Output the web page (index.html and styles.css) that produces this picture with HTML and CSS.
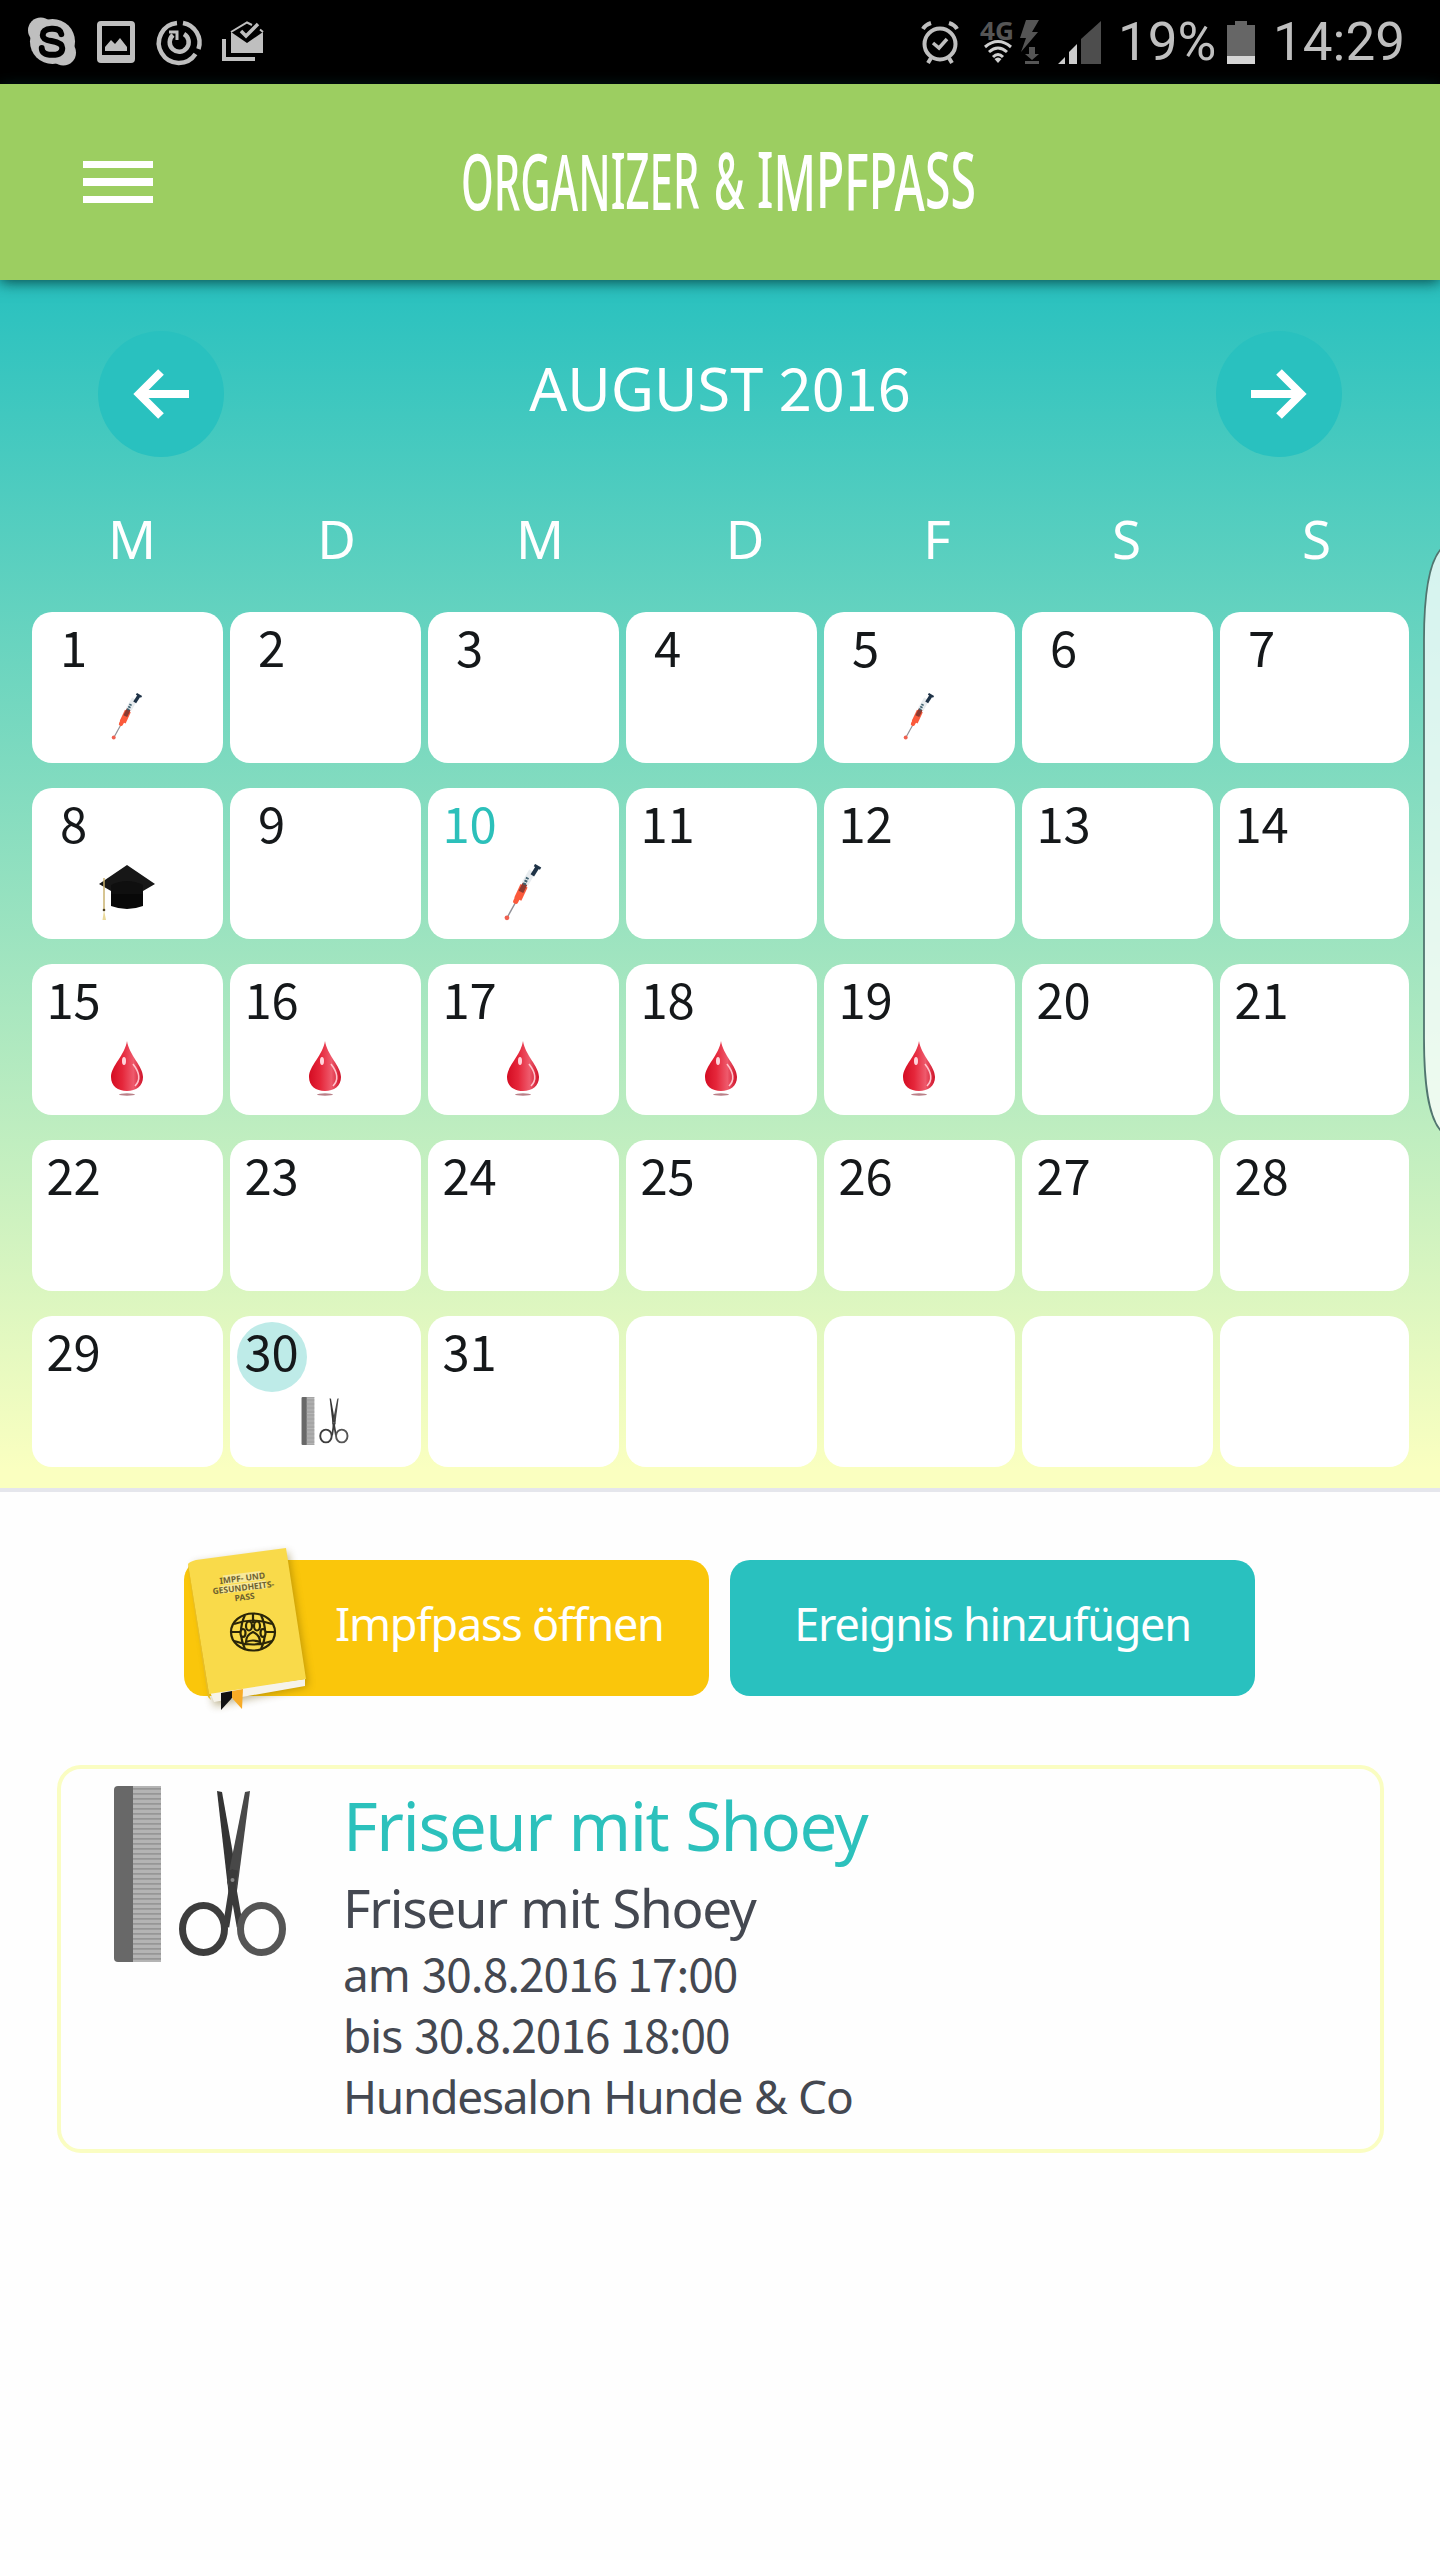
FILE: index.html
```html
<!DOCTYPE html>
<html lang="de">
<head>
<meta charset="utf-8">
<title>Organizer &amp; Impfpass</title>
<link rel="stylesheet" href="styles.css">
</head>
<body>
<svg class="defs" width="0" height="0">
  <defs>
    <linearGradient id="dropFill" x1="0" y1="0" x2="1" y2="0">
      <stop offset="0" stop-color="#d40c22"/><stop offset=".35" stop-color="#e5263a"/><stop offset=".7" stop-color="#ee5a6c"/><stop offset="1" stop-color="#cf1128"/>
    </linearGradient>
    <symbol id="syringe" viewBox="0 0 40 56">
      <path d="M4 53L14 35" stroke="#8f8f96" stroke-width="1.400"/>
      <circle cx="4.500" cy="52" r="2.300" fill="#f0604f"/>
      <path d="M15 34L21 21" stroke="#fb5a3b" stroke-width="7.500"/>
      <path d="M13 36L15 32" stroke="#fb5a3b" stroke-width="5" stroke-linecap="round"/>
      <path d="M18 27L22 19" stroke="#8c3a30" stroke-width="5"/>
      <path d="M22 19L29 7" stroke="#e8ecef" stroke-width="7"/>
      <path d="M21 20L24.500 13" stroke="#40616f" stroke-width="3" stroke-dasharray="2 1"/>
      <path d="M29 11L34 3" stroke="#1f3347" stroke-width="4"/>
      <path d="M31 1L37 4.500" stroke="#1f3347" stroke-width="2.500"/>
    </symbol>
    <symbol id="drop" viewBox="0 0 36 58">
      <path d="M18 1C20 15 34 26 34 37C34 46 27 51 18 51S2 46 2 37C2 26 16 15 18 1Z" fill="url(#dropFill)"/>
      <path d="M24 24C31 33 32 40 26 46" fill="none" stroke="#ffc3cc" stroke-width="1.600"/>
      <ellipse cx="15" cy="21" rx="2" ry="4" fill="#ffd5dc"/>
      <ellipse cx="18" cy="54.500" rx="8" ry="1.200" fill="#b98088"/>
    </symbol>
    <symbol id="cap" viewBox="0 0 58 58">
      <path d="M13 20H45V42Q29 48 13 42Z" fill="#080808"/>
      <path d="M29 1L57 20L45 27Q29 12 13 27L1 20Z" fill="#171717"/>
      <path d="M13 21Q29 13 45 21V30H13Z" fill="#0f0f0f"/>
      <path d="M6 14V46" stroke="#c9b26f" stroke-width="1.500"/>
      <path d="M6 46L4.500 56H8Z" fill="#ead99a"/>
      <circle cx="6" cy="46" r="1.300" fill="#493c20"/>
    </symbol>
    <symbol id="salon" viewBox="0 0 172 176">
      <path d="M4 0H20V176H4Q0 176 0 172V4Q0 0 4 0Z" fill="#686868"/>
      <rect x="19" width="28" height="176" fill="#b4b4b4"/>
      <path d="M33 2V176" stroke="#969696" stroke-width="28" stroke-dasharray="1.800 3.200"/>
      <path d="M103 5L108 6L124 96L116 120Z" fill="#343434"/>
      <path d="M136 5L131 6L113 96L121 120Z" fill="#484848"/>
      <path d="M121 84L112 141M116 84L126 141" stroke="#3b3b3b" stroke-width="6.500"/>
      <ellipse cx="89.500" cy="143" rx="21" ry="23.500" fill="none" stroke="#3d3d3d" stroke-width="7"/>
      <ellipse cx="147.500" cy="143" rx="21" ry="23.500" fill="none" stroke="#555" stroke-width="7"/>
      <circle cx="118.500" cy="94" r="2" fill="#888"/>
    </symbol>
  </defs>
</svg>

<div class="status">
  <div class="status-left">
    <svg width="49" height="50" viewBox="0 0 50 50"><circle cx="13" cy="13" r="13" fill="#bfbfbf"/><circle cx="36" cy="36" r="13" fill="#bfbfbf"/><circle cx="25" cy="24.500" r="23" fill="#bfbfbf"/><path d="M34 17Q33 11 24 11.500Q15 12 15 18Q15 22.500 24 24Q35 26 35 31Q35 38 25 38Q14 38 14 31" fill="none" stroke="#000" stroke-width="6" stroke-linecap="round"/></svg>
    <svg width="38" height="42" viewBox="0 0 38 42"><path fill="#bfbfbf" fill-rule="evenodd" d="M4 0H34Q38 0 38 4V38Q38 42 34 42H4Q0 42 0 38V4Q0 0 4 0ZM5 5V34H33V5ZM8 30V26L14 19L18 23L23 17L30 26V30Z"/></svg>
    <svg class="sync" width="45" height="45" viewBox="0 0 45 45" fill="none" stroke="#bfbfbf" stroke-width="4.500"><path d="M26 3A20 20 0 0 1 41.500 29M38.500 34A20 20 0 1 1 20 3"/><path d="M27 14A9.500 9.500 0 1 1 16 15"/><path d="M12 12H20V20" stroke-width="3"/></svg>
    <svg width="42" height="42" viewBox="0 0 42 42"><path fill="#bfbfbf" d="M9 11L25 22L41 11V32H9Z"/><path d="M9 11L25 1.500L30 4M41 11L38 8.500" stroke="#bfbfbf" stroke-width="2" fill="none"/><path d="M19 10L24 15L36 3" stroke="#bfbfbf" stroke-width="3.500" fill="none"/><path d="M2 18V38H33" stroke="#bfbfbf" stroke-width="4" fill="none"/></svg>
  </div>
  <div class="status-right">
    <svg class="alarm" width="38" height="43" viewBox="0 0 38 43" fill="none" stroke="#bfbfbf"><circle cx="19" cy="23" r="15.500" stroke-width="4"/><path d="M12 22L18 27L26 18" stroke-width="3.500"/><path d="M2 8Q4 4 10 2M28 2Q34 4 36 8" stroke-width="4"/><path d="M10 37L7 42M28 37L31 42" stroke-width="4"/></svg>
    <svg class="net" width="60" height="44" viewBox="0 0 60 44"><text class="net-label" x="0" y="20" textLength="34" lengthAdjust="spacingAndGlyphs">4G</text><g fill="none" stroke="#cfcfcf" stroke-width="3"><path d="M5 27Q18 16 31 27M9 32Q18 24 27 32M13 37Q18 32 23 37"/></g><path d="M14.500 39Q18 36 21.500 39L18 43Z" fill="#cfcfcf"/><path d="M46 0H59L52 12H58L41 32L46 18H40Z" fill="#555"/><path d="M49 27H55V34H59L52 40L45 34H49ZM45 41H59V44H45Z" fill="#555"/></svg>
    <svg class="signal" width="43" height="43" viewBox="0 0 43 43"><path d="M0 43L7 36V43ZM11 31L19 23V43H11Z" fill="#ccc"/><path d="M23 18L43 0V43H23Z" fill="#4d4d4d"/></svg>
    <span class="battery-text">19%</span>
    <svg class="battery" width="28" height="43" viewBox="0 0 28 43"><path d="M0 4H8V0H20V4H28V43H0Z" fill="#666"/><path d="M0 35H28V43H0Z" fill="#d5d5d5"/></svg>
    <span class="clock">14:29</span>
  </div>
</div>

<header class="header">
  <div class="menu"><i></i><i></i><i></i></div>
  <h1 class="title"><svg width="516" height="72" viewBox="0 0 516 72">
    <text transform="translate(-1 64) scale(.537 1)" dy="0 1 -1 1 0 -2 0 1 -1">ORGANIZER</text>
    <text transform="translate(252 63) scale(.53 1)">&amp;</text>
    <text transform="translate(295 64) scale(.594 1)" dy="-2 3 -3 2 -1 2 -3 0">IMPFPASS</text>
  </svg></h1>
</header>

<main>
  <section class="calendar">
    <div class="month">
      <div class="arrow"><svg width="126" height="126" viewBox="0 0 126 126"><path d="M91 63H42M63 41L41 63L63 85" fill="none" stroke="#fff" stroke-width="8"/></svg></div>
      <h2>AUGUST <span class="num">2016</span></h2>
      <div class="arrow"><svg width="126" height="126" viewBox="0 0 126 126"><path d="M35 63H84M63 41L85 63L63 85" fill="none" stroke="#fff" stroke-width="8"/></svg></div>
    </div>
    <div class="weekdays"><span>M</span><span>D</span><span>M</span><span>D</span><span>F</span><span>S</span><span>S</span></div>
    <div class="days">
      <div class="day"><b>1</b><svg class="small"><use href="#syringe"/></svg></div><div class="day"><b>2</b></div><div class="day"><b>3</b></div><div class="day"><b>4</b></div><div class="day"><b>5</b><svg class="small"><use href="#syringe"/></svg></div><div class="day"><b>6</b></div><div class="day"><b>7</b></div>
      <div class="day"><b>8</b><svg><use href="#cap"/></svg></div><div class="day"><b>9</b></div><div class="day"><b class="today">10</b><svg><use href="#syringe"/></svg></div><div class="day"><b>11</b></div><div class="day"><b>12</b></div><div class="day"><b>13</b></div><div class="day"><b>14</b></div>
      <div class="day"><b>15</b><svg><use href="#drop"/></svg></div><div class="day"><b>16</b><svg><use href="#drop"/></svg></div><div class="day"><b>17</b><svg><use href="#drop"/></svg></div><div class="day"><b>18</b><svg><use href="#drop"/></svg></div><div class="day"><b>19</b><svg><use href="#drop"/></svg></div><div class="day"><b>20</b></div><div class="day"><b>21</b></div>
      <div class="day"><b>22</b></div><div class="day"><b>23</b></div><div class="day"><b>24</b></div><div class="day"><b>25</b></div><div class="day"><b>26</b></div><div class="day"><b>27</b></div><div class="day"><b>28</b></div>
      <div class="day"><b>29</b></div><div class="day"><b class="selected">30</b><svg class="small"><use href="#salon"/></svg></div><div class="day"><b>31</b></div><div class="day"></div><div class="day"></div><div class="day"></div><div class="day"></div>
    </div>
  </section>

  <div class="actions">
    <div class="button pass">
      <svg class="book" width="126" height="165" viewBox="0 0 126 165">
        <defs><filter id="bookShadow" x="-20%" y="-20%" width="140%" height="140%"><feGaussianBlur stdDeviation="4"/></filter></defs>
        <path d="M10 18L104 6L124 140L30 160Z" fill="#6b5200" opacity=".45" filter="url(#bookShadow)"/>
        <path d="M26 146L121 133V140L30 156Z" fill="#f6f3ea"/>
        <path d="M4 18Q5 16 12 14L102 2L122 133L25 148Z" fill="#f9da4a"/>
        <path d="M4 18L25 148L27 154L24 151L4 22Z" fill="#e6bd2a"/>
        <path d="M37 147L48 145V152L37 164Z" fill="#111"/><path d="M48 145L59 143L58 163L48 152Z" fill="#f8ac27"/>
        <g class="book-label" transform="rotate(-7 60 38)"><path d="M40 27H78V36H40ZM36 37H82V45H36Z" fill="#f8e99b"/><text x="59" y="35">IMPF- UND</text><text x="59" y="44.500">GESUNDHEITS-</text><text x="59" y="54">PASS</text></g>
        <g transform="translate(69 86)" fill="none" stroke="#2a2508" stroke-width="2.200"><ellipse rx="22" ry="18.500"/><path d="M-19 -8Q0 -15 19 -8M-19 9Q0 16 19 9M-8 -17Q-16 0 -8 17M8 -17Q16 0 8 17M0 -18V-9M-21 0H-11M11 0H21"/><path d="M-7 10Q-7 3 0 0Q7 3 7 10Q0 7 -7 10Z" fill="#f9da4a"/><ellipse cx="-4" cy="-6" rx="3" ry="4.500" fill="#f9da4a"/><ellipse cx="4" cy="-6" rx="3" ry="4.500" fill="#f9da4a"/><ellipse cx="-10" cy="1" rx="2.500" ry="4" fill="#f9da4a"/><ellipse cx="10" cy="1" rx="2.500" ry="4" fill="#f9da4a"/></g>
      </svg>
      <span>Impfpass öffnen</span>
    </div>
    <div class="button add"><span>Ereignis hinzufügen</span></div>
  </div>

  <article class="event">
    <svg class="event-icon" width="172" height="176"><use href="#salon"/></svg>
    <div class="event-text">
      <h3>Friseur mit Shoey</h3>
      <p class="subject">Friseur mit Shoey</p>
      <p>am <span class="num">30.8.2016 17:00</span></p>
      <p>bis <span class="num">30.8.2016 18:00</span></p>
      <p class="place">Hundesalon Hunde &amp; Co</p>
    </div>
  </article>
</main>
<svg class="edge" width="20" height="586" viewBox="0 0 20 586"><path d="M20 1C10 12 3 36 3 92V490C3 548 10 572 20 583" fill="#fff" fill-opacity=".75" stroke="#51756f" stroke-width="1.800"/></svg>
</body>
</html>
```
FILE: styles.css
```css
* { box-sizing: border-box; }
body { margin: 0; width: 1440px; height: 2560px; overflow: hidden; position: relative; background: #fefefe; font-family: "Noto Sans", sans-serif; color: #444851; }
h1, h2, h3, p { margin: 0; font-weight: 400; }
svg { display: block; flex: none; overflow: visible; }
.defs { position: absolute; }
.num, .day b { font-family: "Noto Sans CJK SC", sans-serif; }
.num { line-height: 1; }

.status { height: 84px; background: #000; display: flex; justify-content: space-between; padding: 0 39px 0 28px; color: #bfbfbf; font-family: Roboto, sans-serif; }
.status-left, .status-right { display: flex; align-items: center; }
.status-left { gap: 20px; }
.sync { margin-left: 2px; }
.status-right { font-size: 53px; line-height: 88px; white-space: nowrap; }
.net { margin-left: 21px; }
.net-label { font: 700 25px "Noto Sans", sans-serif; fill: #555; }
.signal { margin-left: 18px; }
.battery-text { margin-left: 17px; width: 99px; }
.battery { margin-left: 10px; }
.clock { margin-left: 18px; width: 128px; }

.header { position: relative; height: 196px; background: #9cce61; display: flex; align-items: center; padding-left: 83px; box-shadow: 0 2px 14px rgba(0, 40, 40, .8); }
.menu { width: 70px; display: flex; flex-direction: column; gap: 10px; }
.menu i { height: 7.500px; background: #fff; }
.title { margin-left: 309px; }
.title text { font: 500 78px "Noto Sans", sans-serif; fill: #fff; }

.calendar { height: 1212px; padding: 51px 31px 0; border-bottom: 4px solid #e5e6ec; background: linear-gradient(#29c1bf, #faffc0 1190px); }
.month { height: 126px; padding: 0 67px; display: flex; justify-content: space-between; align-items: center; color: #fff; }
.month h2 { margin-top: -12px; font-size: 59.500px; line-height: 80px; white-space: nowrap; }
.arrow { width: 126px; height: 126px; border-radius: 50%; background: #29c1bf; }
.weekdays { margin: 46px -1px 0; height: 72px; display: grid; grid-template-columns: 204px 205px 202px 208px 176px 203px 177px; text-align: center; color: #fff; font-size: 53px; line-height: 72px; }
.days { margin: 36.500px 0 0 .6px; display: grid; grid-template-columns: repeat(6, 191px) 189px; grid-auto-rows: 151px; gap: 25px 7px; }
.day { background: #fff; border-radius: 20px; display: flex; flex-direction: column; align-items: center; }
.day b { align-self: flex-start; margin: 6px 0 0 7px; width: 70px; height: 70px; border-radius: 50%; text-align: center; font-size: 49px; font-weight: 400; line-height: 56px; color: #15181a; }
.day b.today { color: #2cc0ba; }
.day b.selected { background: #beebe8; }
.day svg { width: 58px; height: 58px; }
.day svg.small { width: 48px; height: 48px; margin-top: 5px; }

.actions { margin: 68px 0 0 184px; display: flex; gap: 21px; }
.button { width: 525px; height: 136px; padding-bottom: 9px; border-radius: 20px; display: flex; align-items: center; justify-content: center; color: #fff; font-size: 45px; letter-spacing: -1.250px; line-height: 64px; white-space: nowrap; }
.pass { position: relative; background: #fac60b; justify-content: flex-start; padding-left: 151px; }
.add { background: #29c1bf; }
.book { position: absolute; left: 0; top: -14px; }
.book-label text { font: 700 8.500px "Noto Sans", sans-serif; letter-spacing: 0; fill: #6e6230; text-anchor: middle; }

.event { margin: 69px 56px 0 57px; height: 388px; border: 4px solid #fafdc2; border-radius: 24px; display: flex; padding: 17px 0 0 53px; }
.event-text { padding-left: 57px; white-space: nowrap; font-size: 46px; letter-spacing: -1px; word-spacing: 1px; line-height: 61px; }
.event h3 { color: #2cc1bc; font-size: 67px; letter-spacing: -1.450px; line-height: 78px; }
.subject { margin-bottom: -8.500px; font-size: 53px; letter-spacing: -1.300px; line-height: 88px; }
.place { letter-spacing: -1.250px; }
.edge { position: absolute; right: -1px; top: 548px; }
```
